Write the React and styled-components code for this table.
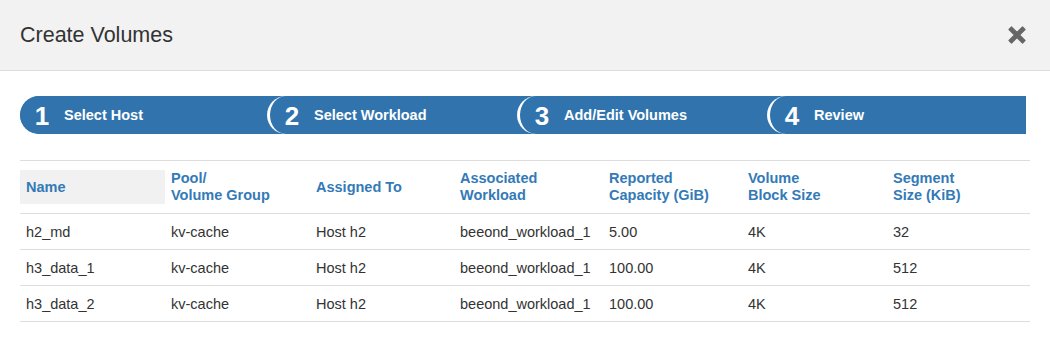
import React from 'react'
import styled, { createGlobalStyle } from 'styled-components'

const GlobalStyle = createGlobalStyle`
  html, body {
    margin: 0;
    padding: 0;
    background: #fff;
    font-family: 'Liberation Sans', Arial, sans-serif;
    color: #333;
  }
`

const Modal = styled.div`
  width: 1050px;
  height: 341px;
  background: #fff;
`

const Header = styled.div`
  height: 70px;
  background: #f2f2f2;
  border-bottom: 1px solid #ddd;
  display: flex;
  align-items: center;
  justify-content: space-between;
  padding: 0 22px 0 20px;
`

const Title = styled.h1`
  margin: 0;
  font-size: 21.5px;
  font-weight: normal;
  color: #333;
`

const CloseButton = styled.button`
  border: none;
  background: none;
  padding: 0;
  width: 22px;
  height: 22px;
  display: flex;
  cursor: pointer;
`

const Body = styled.div`
  padding: 25px 20px 0 20px;
`

const Steps = styled.div`
  display: flex;
  width: 1006px;
  height: 38px;
  background: #3174ad;
  border-radius: 19px 0 0 19px;
  overflow: hidden;
`

const Step = styled.div`
  width: ${({ $first }) => ($first ? '247px' : '250px')};
  flex-shrink: 0;
  box-sizing: border-box;
  display: flex;
  align-items: center;
  padding-left: 12px;
  background: #3174ad;
  border-radius: 19px 0 0 19px;
  border-left: ${({ $first }) => ($first ? 'none' : '3px solid #fff')};
  color: #fff;
`

const StepNumber = styled.span`
  width: 20px;
  text-align: center;
  font-size: 26px;
  font-weight: bold;
  line-height: 38px;
  margin-top: 2px;
`

const StepLabel = styled.span`
  margin-left: 12px;
  font-size: 14.5px;
  font-weight: bold;
`

const Table = styled.table`
  margin-top: 26px;
  width: 1010px;
  border-collapse: collapse;
  table-layout: fixed;
  font-size: 14.5px;
`

const HeadRow = styled.tr`
  border-top: 1px solid #ddd;
  border-bottom: 1px solid #ddd;
`

const Th = styled.th`
  padding: 9px 0;
  text-align: left;
  vertical-align: middle;
  font-weight: bold;
  color: #337ab7;
`

const HeadLabel = styled.div`
  height: 34px;
  padding: 0 6px;
  display: flex;
  align-items: center;
  line-height: 17px;
  background: ${({ $sorted }) => ($sorted ? '#f1f1f1' : 'transparent')};
`

const Row = styled.tr`
  border-bottom: 1px solid #ddd;
`

const Td = styled.td`
  height: 35px;
  padding: 0 6px;
  vertical-align: middle;
  white-space: nowrap;
  color: #333;
`

const steps = ['Select Host', 'Select Workload', 'Add/Edit Volumes', 'Review']

const columns = [
  { label: ['Name'], width: 145, sorted: true },
  { label: ['Pool/', 'Volume Group'], width: 145 },
  { label: ['Assigned To'], width: 144 },
  { label: ['Associated', 'Workload'], width: 149 },
  { label: ['Reported', 'Capacity (GiB)'], width: 139 },
  { label: ['Volume', 'Block Size'], width: 145 },
  { label: ['Segment', 'Size (KiB)'], width: 143 },
]

const rows = [
  ['h2_md', 'kv-cache', 'Host h2', 'beeond_workload_1', '5.00', '4K', '32'],
  ['h3_data_1', 'kv-cache', 'Host h2', 'beeond_workload_1', '100.00', '4K', '512'],
  ['h3_data_2', 'kv-cache', 'Host h2', 'beeond_workload_1', '100.00', '4K', '512'],
]

const CloseIcon = () => (
  <svg width="22" height="22" viewBox="0 0 22 22">
    <path
      d="M3 5.5 L5.5 3 L11 8.5 L16.5 3 L19 5.5 L13.5 11 L19 16.5 L16.5 19 L11 13.5 L5.5 19 L3 16.5 L8.5 11 Z"
      fill="#666"
      stroke="#666"
      strokeWidth="1.2"
      strokeLinejoin="round"
    />
  </svg>
)

export default function App() {
  return (
    <>
      <GlobalStyle />
      <Modal>
        <Header>
          <Title>Create Volumes</Title>
          <CloseButton type="button" aria-label="Close">
            <CloseIcon />
          </CloseButton>
        </Header>
        <Body>
          <Steps>
            {steps.map((label, i) => (
              <Step key={label} $first={i === 0}>
                <StepNumber>{i + 1}</StepNumber>
                <StepLabel>{label}</StepLabel>
              </Step>
            ))}
          </Steps>
          <Table>
            <colgroup>
              {columns.map((col) => (
                <col key={col.label.join()} style={{ width: col.width }} />
              ))}
            </colgroup>
            <thead>
              <HeadRow>
                {columns.map((col) => (
                  <Th key={col.label.join()}>
                    <HeadLabel $sorted={col.sorted}>
                      <span>
                        {col.label.map((line, j) => (
                          <React.Fragment key={line}>
                            {j > 0 && <br />}
                            {line}
                          </React.Fragment>
                        ))}
                      </span>
                    </HeadLabel>
                  </Th>
                ))}
              </HeadRow>
            </thead>
            <tbody>
              {rows.map((row) => (
                <Row key={row[0]}>
                  {row.map((cell, j) => (
                    <Td key={j}>{cell}</Td>
                  ))}
                </Row>
              ))}
            </tbody>
          </Table>
        </Body>
      </Modal>
    </>
  )
}
